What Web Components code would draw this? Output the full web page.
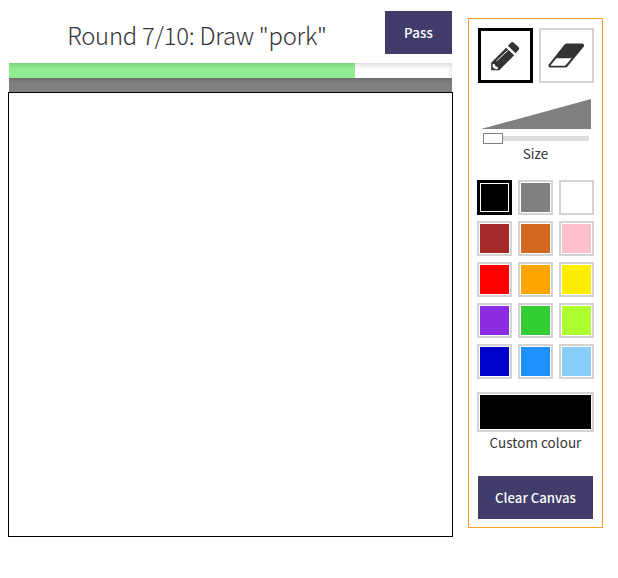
<!DOCTYPE html>
<html lang="en">
<head>
<meta charset="utf-8">
<title>Drawing round</title>
<style>
html,body{margin:0;background:#fff}
body{font-family:"Noto Sans CJK SC","Open Sans",sans-serif;color:#333;height:578px;overflow:hidden}
</style>
</head>
<body>
<draw-app></draw-app>
<script>
const define = (name, html) => customElements.define(name, class extends HTMLElement {
  constructor() {
    super();
    const t = document.createElement('template');
    t.innerHTML = html;
    this.attachShadow({mode: 'open'}).append(t.content.cloneNode(true));
  }
});

define('action-button', `<style>
:host{display:block;height:43px}
button{display:block;width:100%;height:43px;border:0;padding:0;background:#413c69;color:#fff;font:500 13.2px/43px "Noto Sans CJK SC",sans-serif;letter-spacing:var(--track,0);text-align:center;white-space:nowrap}
</style><button><slot></slot></button>`);

define('round-header', `<style>
:host{display:flex;height:43px;padding:11px 0 9px 1px;width:443px}
h1{flex:1;margin:0;font:300 23.8px/48px "Noto Sans CJK SC",sans-serif;text-align:center;white-space:nowrap;letter-spacing:-.22px}
action-button{width:67px;--track:.15px}
</style><h1><slot></slot></h1><action-button>Pass</action-button>`);

define('time-bar', `<style>
:host{display:block;margin-left:1px;width:443px;height:29px}
.track{position:relative;height:15px;background:#fff}
.fill{height:15px;width:346px;background:#90ee90}
.under{position:relative;height:14px;background:#808080}
.track::after,.under::after{content:"";position:absolute;inset:0;box-shadow:inset 0 2px 5px rgba(0,0,0,.16)}
.track,.under{overflow:hidden}
.track::after,.under::after{left:-6px}
.track::after{bottom:-8px}.under::after{bottom:-8px;right:-6px}
</style><div class="track"><div class="fill"></div></div><div class="under"></div>`);

define('draw-canvas', `<style>
:host{display:block;box-sizing:border-box;width:445px;height:445px;border:1px solid #000;background:#fff}
</style>`);

define('tool-button', `<style>
:host{display:grid;place-items:center;box-sizing:border-box;width:55px;height:55px;border:2px solid #d3d3d3;background:#fff}
:host([selected]){border:3px solid #000}
</style><slot></slot>`);

define('size-slider', `<style>
:host{display:block;height:64px}
svg{display:block;margin-left:4px}
.track{margin:7px 0 0 7px;width:105px;height:5px;background:#ddd;display:flex;align-items:center}
.thumb{box-sizing:border-box;flex:none;margin-left:-1px;width:20px;height:11px;border:1px solid #808080;background:#fff}
.label{font-size:13.4px;line-height:20px;text-align:center;margin-top:2px}
</style><svg width="110" height="30"><path d="M0 30L110 0V30Z" fill="#808080"/></svg>
<div class="track"><div class="thumb"></div></div><div class="label"><slot></slot></div>`);

define('colour-swatch', `<style>
:host{display:block;box-sizing:border-box;height:35px;border:2px solid #d3d3d3;padding:1px;background:#fff}
:host([selected]){border:3px solid #000}
div{height:100%;background:var(--c)}
</style><div></div>`);

define('colour-grid', `<style>
:host{display:grid;grid-template-columns:repeat(3,35px);gap:6px}
</style>` + ['#000','#808080','#fff','#a52a2a','#d2691e','#ffc0cb','#f00','#ffa500','#ffee00','#8a2be2','#32cd32','#adff2f','#0000cd','#1e90ff','#87cefa']
  .map((c, i) => `<colour-swatch style="--c:${c}"${i ? '' : ' selected'}></colour-swatch>`).join(''));

define('tool-panel', `<style>
:host{display:block;box-sizing:border-box;width:135px;height:510px;margin-top:18px;border:1px solid #ff9933;padding:9px 8px}
.tools{display:flex;gap:6px;margin-left:1px}
size-slider{margin-top:16px}
colour-grid{margin-top:17px}
.custom{height:40px;margin-top:13px}
.label{font-size:13.4px;line-height:20px;text-align:center;letter-spacing:.08px;white-space:nowrap}
action-button{margin:24px 1px 0}
svg{display:block}
.pencil{transform:translate(-.5px,0)}
.eraser{transform:translate(-.7px,-.2px)}
</style>
<div class="tools">
<tool-button selected><svg class="pencil" width="30" height="30" viewBox="90 93 90 90"><path fill="#333" d="M92 181V158L137 113L161 136L116 181ZM142 107L151 98Q155 94 160 98L174 111Q178 115 174 120L165 130Z"/><path d="M97 161L103 163L105 169L111 171L113 176L105 178L96 171Z" fill="#fff"/><path d="M108 153L142 121" stroke="#fff" stroke-width="3"/></svg></tool-button>
<tool-button><svg class="eraser" width="38" height="26" viewBox="261 97 114 78"><path fill="#333" fill-rule="evenodd" d="M320 99H366Q374 101 370 109L322 167Q319 171 314 171H270Q262 170 265 163L312 103Q315 99 320 99ZM288 143L271 164Q270 166 273 166H312Q315 166 317 163L334 143Z"/></svg></tool-button>
</div>
<size-slider>Size</size-slider>
<colour-grid></colour-grid>
<colour-swatch class="custom" style="--c:#000"></colour-swatch>
<div class="label">Custom colour</div>
<action-button>Clear Canvas</action-button>`);

define('draw-app', `<style>
:host{display:flex;gap:15px;padding-left:8px;align-items:flex-start}
main{width:445px}
</style><main><round-header>Round 7/10: Draw "pork"</round-header><time-bar></time-bar><draw-canvas></draw-canvas></main><tool-panel></tool-panel>`);
</script>
</body>
</html>
